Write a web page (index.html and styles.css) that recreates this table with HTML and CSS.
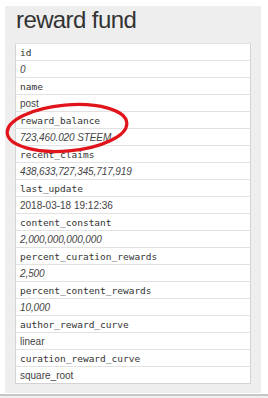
FILE: index.html
```html
<!DOCTYPE html>
<html lang="en">
<head>
    <meta charset="UTF-8">
    <meta name="viewport" content="width=device-width, initial-scale=1.0">
    <title>reward fund</title>
    <link rel="stylesheet" href="styles.css">
</head>
<body>
    <div class="page">
        <div class="panel">
            <h1>reward fund</h1>

            <table class="props">
                <tr><td class="key">id</td></tr>
                <tr><td class="val num">0</td></tr>
                <tr><td class="key">name</td></tr>
                <tr><td class="val">post</td></tr>
                <tr><td class="key">reward_balance</td></tr>
                <tr><td class="val num">723,460.020 STEEM</td></tr>
                <tr><td class="key">recent_claims</td></tr>
                <tr><td class="val num">438,633,727,345,717,919</td></tr>
                <tr><td class="key">last_update</td></tr>
                <tr><td class="val">2018-03-18 19:12:36</td></tr>
                <tr><td class="key">content_constant</td></tr>
                <tr><td class="val num">2,000,000,000,000</td></tr>
                <tr><td class="key">percent_curation_rewards</td></tr>
                <tr><td class="val num">2,500</td></tr>
                <tr><td class="key">percent_content_rewards</td></tr>
                <tr><td class="val num">10,000</td></tr>
                <tr><td class="key">author_reward_curve</td></tr>
                <tr><td class="val">linear</td></tr>
                <tr><td class="key">curation_reward_curve</td></tr>
                <tr><td class="val">square_root</td></tr>
            </table>

            <!-- hand-drawn circle around the balance -->
            <svg class="mark" width="132" height="60" viewBox="0 0 132 60">
                <ellipse cx="62" cy="29" rx="60" ry="23" transform="rotate(-5 62 29)"
                         fill="none" stroke="#e0141a" stroke-width="3.2"/>
            </svg>
        </div>
    </div>
    <div class="footer"></div>
</body>
</html>
```

FILE: styles.css
```css
body {
    margin: 0;
    background-color: #fff;
    font-family: "Liberation Sans", Arial, sans-serif;
    color: #333;
}

.page {
    padding: 6px 7px 0 5px;
}

.panel {
    position: relative;
    background-color: #eee;
    padding: 1px 10px 9px 10px;
}

h1 {
    margin: 0;
    padding-left: 1px;
    font-size: 24px;
    line-height: 26px;
    letter-spacing: -0.6px;
    font-weight: normal;
    color: #333;
}

.props {
    width: 100%;
    margin-top: 10px;
    border-collapse: collapse;
    background-color: #fff;
    border: 1px solid #d4d4d4;
}

.props td {
    height: 16px;
    padding: 0 4px;
    border-top: 1px solid #e2e2e2;
    vertical-align: middle;
    white-space: nowrap;
}

.key {
    font-family: "DejaVu Sans Mono", monospace;
    font-size: 9.5px;
    color: #333;
}

.val {
    font-size: 10px;
    color: #444;
}

.val.num {
    font-style: italic;
    letter-spacing: -0.1px;
}

.mark {
    position: absolute;
    left: 0;
    top: 93px;
}

.footer {
    margin-top: 1px;
    height: 4px;
    border-top: 2px solid #c6c6c6;
    background-color: #f0f0f0;
}
```
